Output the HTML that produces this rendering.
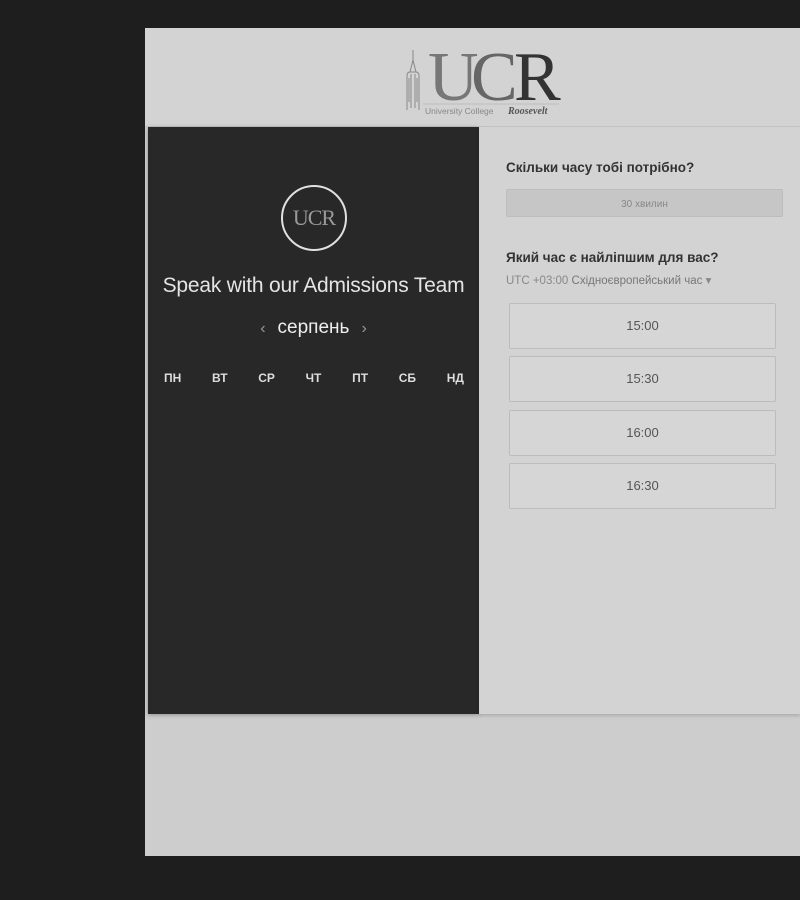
<!DOCTYPE html>
<html><head><meta charset="utf-8"><style>
*{margin:0;padding:0;box-sizing:border-box}
body{width:800px;height:900px;background:#1e1e1e;position:relative;overflow:hidden;font-family:"Liberation Sans","DejaVu Sans",sans-serif}
.panel{position:absolute;left:145px;top:28px;width:655px;height:828px;background:#cdcdcd}
.head{position:absolute;left:0;top:0;width:655px;height:99px;background:#d3d3d3;border-bottom:1px solid #c4c4c4}
.logo{position:absolute;left:256px;top:12px;width:160px;height:76px}
.side{position:absolute;left:3px;top:99px;width:331px;height:587px;background:#282828;box-shadow:0 1px 4px rgba(0,0,0,.3)}
.right{position:absolute;left:334px;top:99px;width:321px;height:587px;background:#d3d3d3;box-shadow:0 2px 3px rgba(0,0,0,.15)}
.circle{position:absolute;left:133px;top:58px;width:66px;height:66px;border:2px solid #e0e0e0;border-radius:50%;color:#999;font-family:"Liberation Serif",serif;font-size:22px;text-align:center;line-height:62px;letter-spacing:-1px}
.title{position:absolute;left:0;width:331px;top:147px;text-align:center;color:#e4e4e4;font-size:21px;letter-spacing:-.2px}
.month{position:absolute;left:0;width:331px;top:190px;text-align:center;color:#eee;font-size:19px}
.month span{color:#999;font-size:16px;margin:0 12px}
.days{position:absolute;left:16px;top:244px;width:300px;display:flex;justify-content:space-between;color:#ddd;font-size:12px;font-weight:bold}
h3{position:absolute;left:27px;font-size:13.5px;color:#333;font-weight:bold}
.dur{position:absolute;left:27px;top:62px;width:277px;height:28px;background:#c6c6c6;border:1px solid #bdbdbd;border-radius:2px;text-align:center;line-height:30px;font-size:10px;color:#888}
.tz{position:absolute;left:27px;top:146px;font-size:11.5px;color:#888}
.slot{position:absolute;left:30px;width:267px;height:46px;border:1px solid #bcbcbc;border-radius:2px;background:#d6d6d6;text-align:center;line-height:44px;font-size:13px;color:#555}
</style></head><body>
<div class="panel">
 <div class="head">
  <svg class="logo" viewBox="0 0 160 76">
   <path d="M12 20 V10 M9 32 L12 20 L15 32 M6 70 V36 Q6 32 9 32 H15 Q18 32 18 36 V70 M8 38 V62 M16 38 V62 M10 34 V68 M14 34 V68" stroke="#888" stroke-width="1" fill="none"/>
   <path d="M22 64 H158" stroke="#aaa" stroke-width=".6"/>
   <text x="27" y="60" font-family="Liberation Serif,serif" font-size="70" fill="#777" letter-spacing="-5">U</text>
   <text x="70" y="60" font-family="Liberation Serif,serif" font-size="70" fill="#666" letter-spacing="-5">C</text>
   <text x="113" y="60" font-family="Liberation Serif,serif" font-size="70" fill="#333">R</text>
   <text x="24" y="74" font-family="Liberation Sans,sans-serif" font-size="8.5" fill="#888">University College</text>
   <text x="107" y="74" font-family="Liberation Serif,serif" font-size="10" font-style="italic" font-weight="bold" fill="#555">Roosevelt</text>
  </svg>
 </div>
 <div class="side">
  <div class="circle">UCR</div>
  <div class="title">Speak with our Admissions Team</div>
  <div class="month"><span>‹</span>серпень<span>›</span></div>
  <div class="days"><span>ПН</span><span>ВТ</span><span>СР</span><span>ЧТ</span><span>ПТ</span><span>СБ</span><span>НД</span></div>
 </div>
 <div class="right">
  <h3 style="top:33px">Скільки часу тобі потрібно?</h3>
  <div class="dur">30 хвилин</div>
  <h3 style="top:123px">Який час є найліпшим для вас?</h3>
  <div class="tz">UTC +03:00 <b style="font-weight:normal;color:#777">Східноєвропейський час</b> ▾</div>
  <div class="slot" style="top:176px">15:00</div>
  <div class="slot" style="top:229px">15:30</div>
  <div class="slot" style="top:283px">16:00</div>
  <div class="slot" style="top:336px">16:30</div>
 </div>
</div>
</body></html>
